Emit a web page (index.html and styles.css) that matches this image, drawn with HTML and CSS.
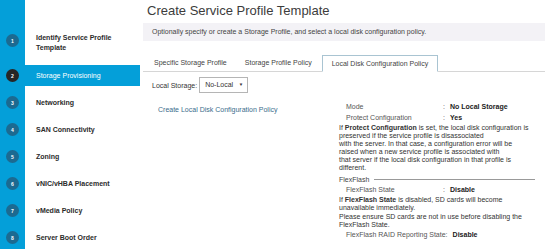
FILE: index.html
```html
<!DOCTYPE html>
<html lang="en">
<head>
    <meta charset="UTF-8">
    <title>Create Service Profile Template</title>
    <link rel="stylesheet" href="styles.css">
</head>
<body>
    <aside class="wizard-nav">
        <div class="step step-tall"><span class="num">1</span><span class="label">Identify Service Profile<br>Template</span></div>
        <div class="step active"><span class="num">2</span><span class="label">Storage Provisioning</span></div>
        <div class="step"><span class="num">3</span><span class="label">Networking</span></div>
        <div class="step"><span class="num">4</span><span class="label">SAN Connectivity</span></div>
        <div class="step"><span class="num">5</span><span class="label">Zoning</span></div>
        <div class="step"><span class="num">6</span><span class="label">vNIC/vHBA Placement</span></div>
        <div class="step"><span class="num">7</span><span class="label">vMedia Policy</span></div>
        <div class="step"><span class="num">8</span><span class="label">Server Boot Order</span></div>
    </aside>

    <main class="content">
        <h1>Create Service Profile Template</h1>
        <div class="hint">Optionally specify or create a Storage Profile, and select a local disk configuration policy.</div>

        <div class="tabs">
            <div class="tab">Specific Storage Profile</div>
            <div class="tab">Storage Profile Policy</div>
            <div class="tab selected">Local Disk Configuration Policy</div>
        </div>

        <div class="storage-row">
            <span>Local Storage:</span>
            <div class="select">No-Local <span class="caret">&#9660;</span></div>
        </div>

        <div class="panes">
            <div class="left-pane">
                <a href="#">Create Local Disk Configuration Policy</a>
            </div>
            <div class="right-pane">
                <div class="prop"><span class="key">Mode</span><span class="colon">:</span><b>No Local Storage</b></div>
                <div class="prop"><span class="key">Protect Configuration</span><span class="colon">:</span><b>Yes</b></div>
                <p class="note">If <b>Protect Configuration</b> is set, the local disk configuration is<br>
                preserved if the service profile is disassociated<br>
                with the server. In that case, a configuration error will be<br>
                raised when a new service profile is associated with<br>
                that server if the local disk configuration in that profile is<br>
                different.</p>
                <div class="group-title"><span>FlexFlash</span></div>
                <div class="prop"><span class="key">FlexFlash State</span><span class="colon">:</span><b>Disable</b></div>
                <p class="note note-ff">If <b>FlexFlash State</b> is disabled, SD cards will become<br>
                unavailable immediately.<br>
                Please ensure SD cards are not in use before disabling the<br>
                FlexFlash State.</p>
                <div class="prop"><span class="key">FlexFlash RAID Reporting State</span><span class="colon">:</span><b>Disable</b></div>
            </div>
        </div>
    </main>
</body>
</html>
```

FILE: styles.css
```css
body {
    margin: 0;
    display: flex;
    height: 249px;
    overflow: hidden;
    background-color: #FFFFFF;
    font-family: 'Liberation Sans', Arial, sans-serif;
    color: #333333;
}

/* wizard steps */
.wizard-nav {
    width: 140px;
    flex-shrink: 0;
    padding-top: 28px;
    background: linear-gradient(to right, #049FD9 0, #049FD9 25px, #FFFFFF 25px);
}

.step {
    display: flex;
    align-items: center;
    height: 21px;
    margin-bottom: 6px;
    font-size: 7px;
    font-weight: bold;
    color: #2B2B2B;
}

.step-tall {
    height: 31px;
    align-items: flex-start;
    padding-top: 5px;
    box-sizing: border-box;
}

.step .num {
    width: 13px;
    height: 13px;
    margin: 0 17px 0 6px;
    border-radius: 50%;
    background-color: #1C6A91;
    color: #FFFFFF;
    font-size: 5px;
    display: flex;
    justify-content: center;
    align-items: center;
    flex-shrink: 0;
}

.step-tall .num {
    margin-top: 1px;
}

.step-tall .label {
    line-height: 10px;
}

.step.active {
    background-color: #049FD9;
}

.step.active .num {
    background-color: #262626;
}

.step.active .label {
    color: #FFFFFF;
    font-weight: normal;
}

/* main area */
.content {
    flex: 1;
    padding-left: 3px;
    font-size: 7px;
}

.content h1 {
    margin: 2px 0 0 4px;
    font-size: 13px;
    font-weight: normal;
    color: #3C3C3C;
    line-height: 17px;
}

.hint {
    margin-top: 4px;
    height: 18px;
    line-height: 18px;
    padding-left: 9px;
    background-color: #F3F2F6;
    color: #444444;
}

.tabs {
    display: flex;
    margin-top: 14px;
    height: 16px;
    border-bottom: 1px solid #D6D6D6;
    padding-left: 11px;
}

.tab {
    margin-right: 18px;
    line-height: 16px;
    color: #444444;
}

.tab:nth-child(2) {
    margin-right: 10px;
}

.tab.selected {
    padding: 0 9px;
    border: 1px solid #A9C4D2;
    border-bottom: 1px solid #FFFFFF;
    margin-bottom: -1px;
    background-color: #FFFFFF;
    line-height: 15px;
}

.storage-row {
    display: flex;
    align-items: center;
    height: 16px;
    margin: 5px 0 0 9px;
    color: #333333;
}

.select {
    width: 42px;
    height: 14px;
    line-height: 14px;
    margin-left: 2px;
    padding-left: 5px;
    border: 1px solid #B5B5B5;
    position: relative;
    color: #333333;
}

.select .caret {
    position: absolute;
    right: 4px;
    font-size: 4.5px;
    color: #333333;
}

.panes {
    display: flex;
}

.left-pane {
    width: 181px;
    padding: 13px 0 0 15px;
    line-height: 8px;
}

.left-pane a {
    color: #3B6C8C;
    text-decoration: none;
}

.right-pane {
    flex: 1;
    padding-top: 8px;
    padding-right: 10px;
    color: #333333;
}

.prop {
    display: flex;
    line-height: 11px;
    padding-left: 7px;
    color: #555555;
}

.prop .key {
    min-width: 97px;
    white-space: nowrap;
}

.prop .colon {
    width: 7px;
}

.prop b {
    color: #222222;
}

.note {
    margin: 1px 0 0;
    line-height: 8px;
}

.note-ff {
    line-height: 8.3px;
}

.group-title {
    display: flex;
    align-items: center;
    margin-top: 3px;
    line-height: 9px;
    color: #444444;
}

.group-title::after {
    content: "";
    flex: 1;
    margin-left: 5px;
    border-top: 1px solid #999999;
}
```
